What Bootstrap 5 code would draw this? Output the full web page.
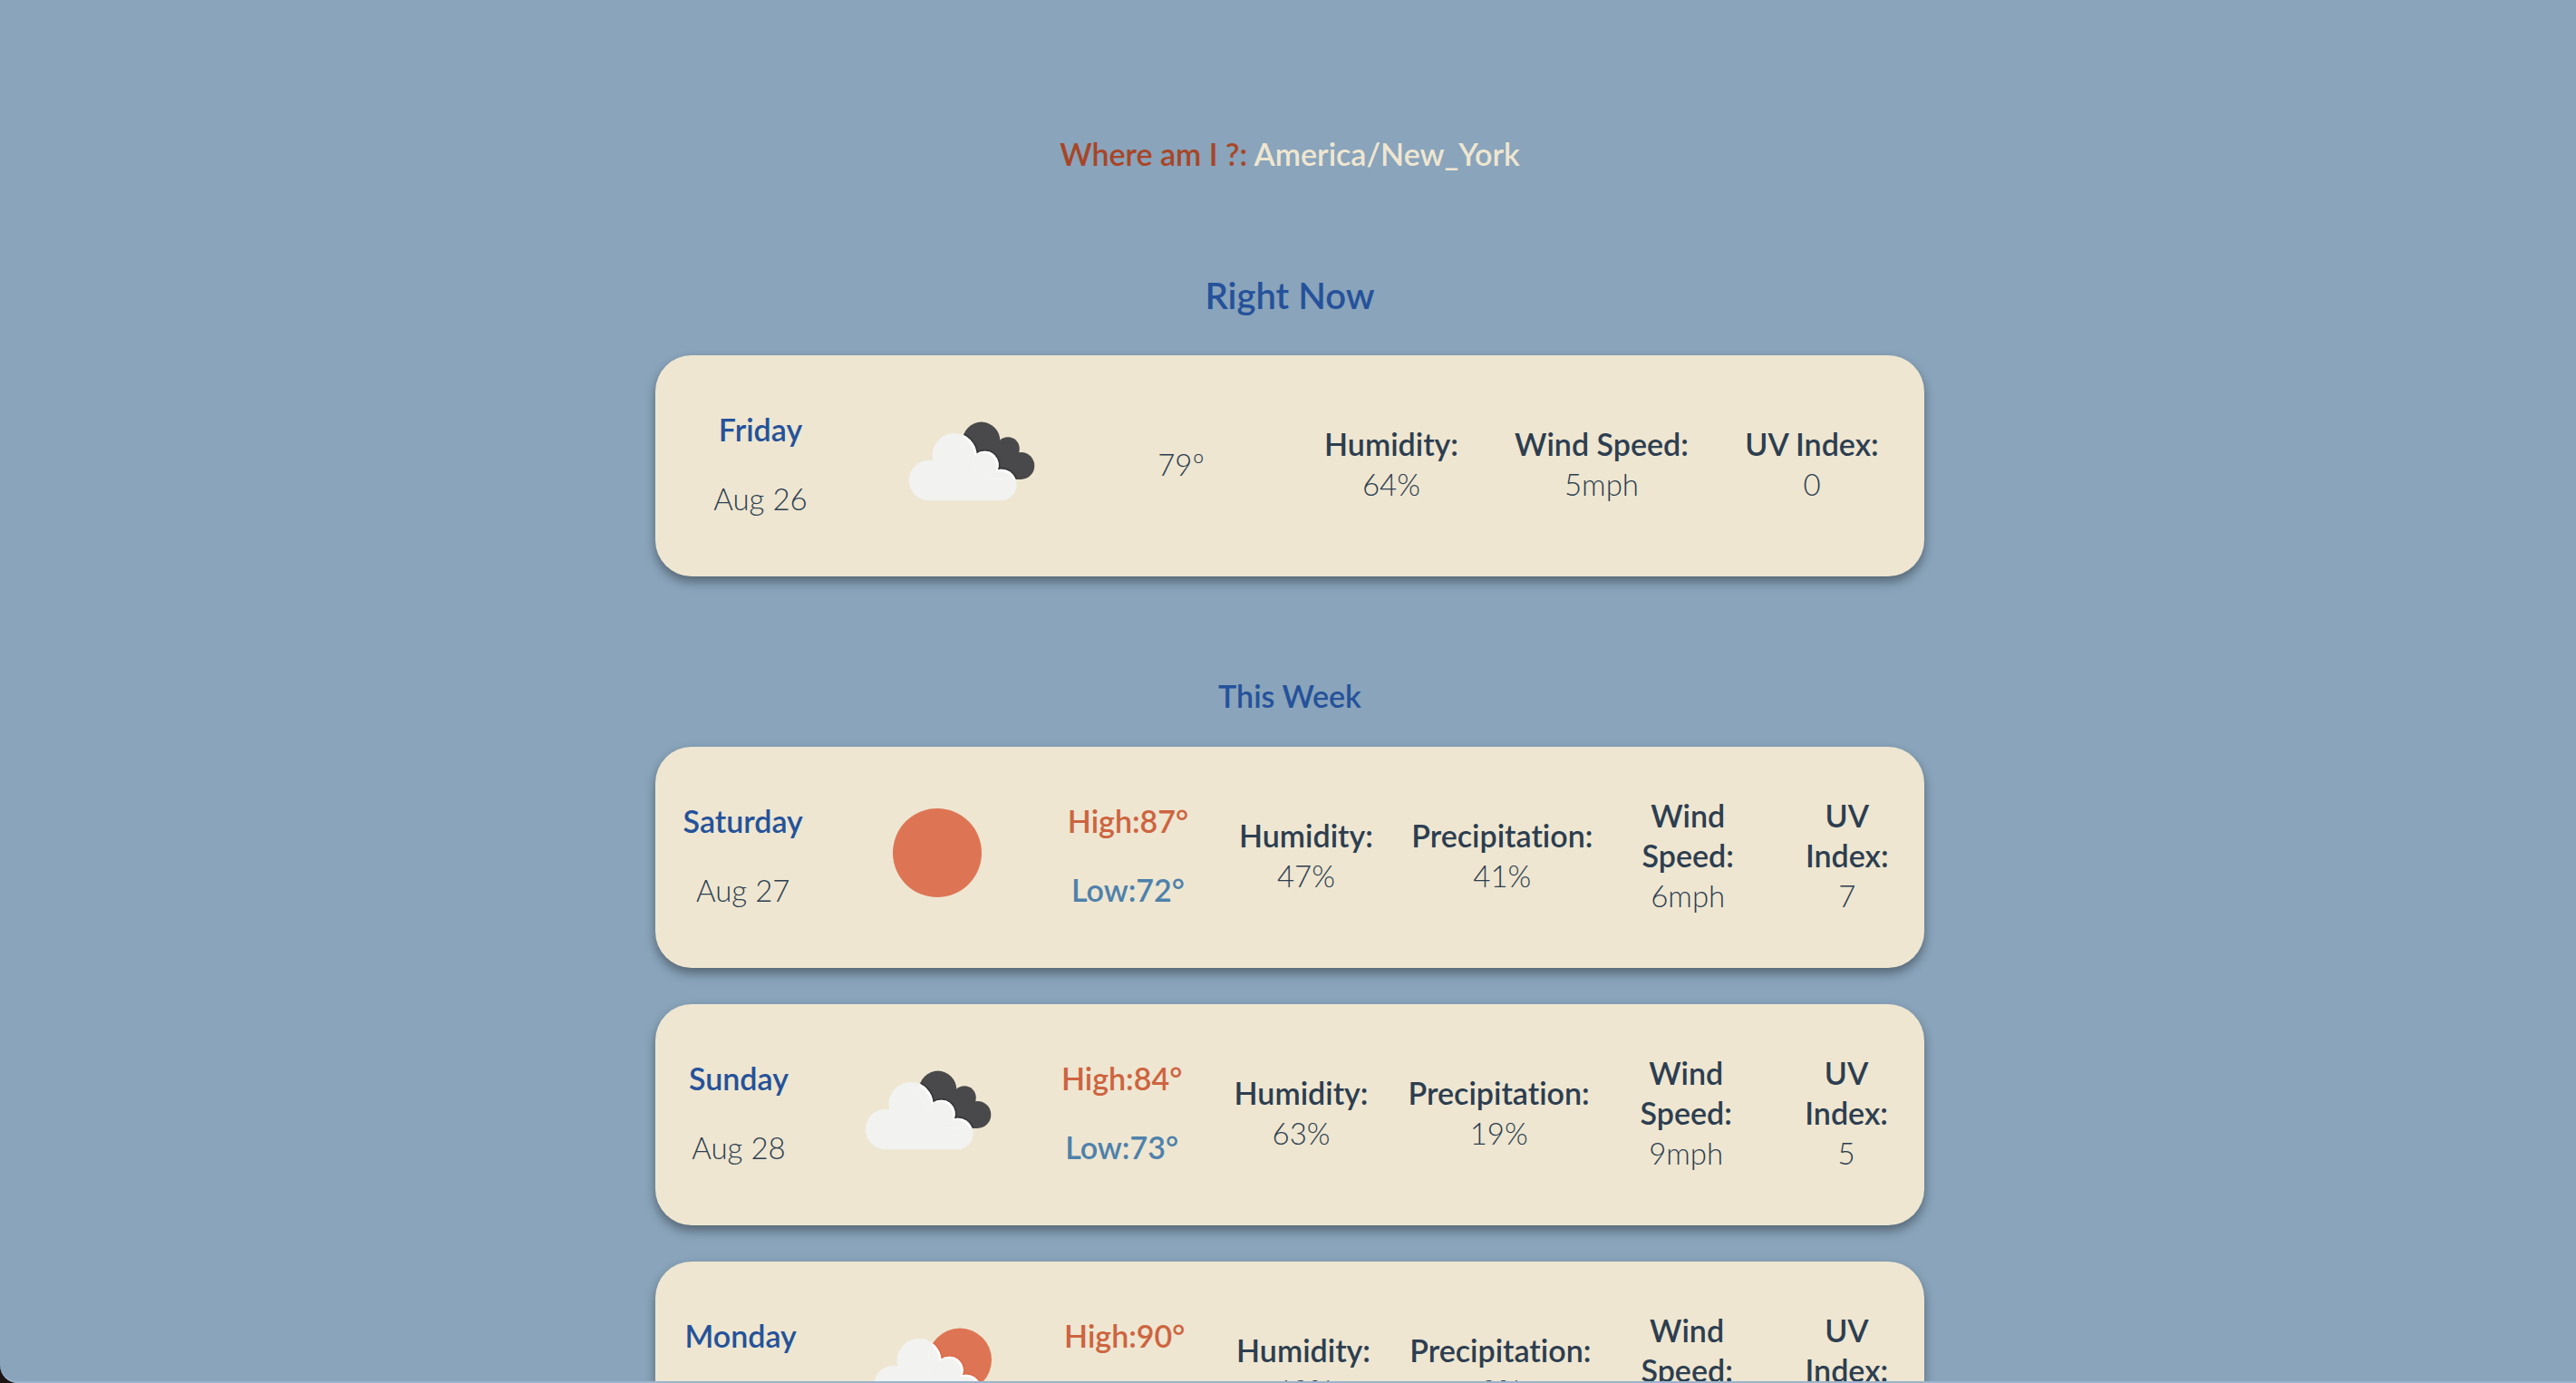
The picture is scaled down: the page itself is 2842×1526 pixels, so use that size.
<!DOCTYPE html>
<html lang="en">
<head>
<meta charset="utf-8">
<meta name="viewport" content="width=device-width, initial-scale=1">
<title>Weather</title>
<link href="https://cdn.jsdelivr.net/npm/bootstrap@5.3.0/dist/css/bootstrap.min.css" rel="stylesheet">
<style>
html { scrollbar-width: none; }
body {
  font-family: Lato, "Open Sans", sans-serif;
  font-size: 33px;
  line-height: 44px;
  font-weight: 300;
  font-variant-ligatures: none;
  color: #2d3e50;
  background: #89a4bb;
}
.window-edge {
  inset: 0;
  pointer-events: none;
  border-bottom: 2px solid #9ab5cd;
  border-bottom-left-radius: 20px;
  box-shadow: 0 0 0 20px #1e1614;
}
.forecast { max-width: 1400px; padding-top: 148px; }
.strong-text { font-size: 34px; font-weight: 600; line-height: 44px; }
.place-line { margin-bottom: 108px; }
.place-label { color: #a84526; }
.place-name { color: #efe6d1; }
.title-now { font-size: 40px; line-height: 52px; font-weight: 600; color: #25529a; margin-bottom: 40px; }
.title-week { color: #25529a; margin: 110px 0 34px; }
.weather-card {
  height: 244px;
  padding-bottom: 4px;
  background: #eee6d1;
  border-radius: 40px;
  box-shadow: 0 6px 12px rgba(0, 0, 0, .38);
}
.now-grid { display: grid; grid-template-columns: repeat(6, 1fr); padding-right: 8px; }
.day-grid { display: grid; grid-template-columns: var(--day) 234fr 190fr 204fr 230fr 181fr 171fr; }
.day-grid > *, .now-grid > * { min-width: 0; }
.day-sat { --day: 194fr; }
.day-sun { --day: 183fr; }
.day-mon { --day: 188fr; }
.stack { gap: 32px; }
.day-name { color: #25529a; }
.high { color: #cd6440; }
.low { color: #4e81ab; }
.two-line { width: min-content; }
.sky { width: 180px; height: 120px; }
</style>
</head>
<body>
<svg class="position-absolute" width="0" height="0" aria-hidden="true">
  <defs>
    <filter id="soft" x="-20%" y="-20%" width="140%" height="140%"><feGaussianBlur stdDeviation="1.4"/></filter>
    <g id="cloud-front">
      <circle cx="73" cy="52.5" r="24.5"/>
      <circle cx="45" cy="80" r="22.2"/>
      <circle cx="106.5" cy="63" r="15.2"/>
      <circle cx="124.5" cy="85" r="17.2"/>
      <path d="M45 66 L60 60 L106 60 L124 80 V102.2 H45 Z"/>
    </g>
    <g id="cloud-back">
      <circle cx="102.7" cy="36.2" r="20.6"/>
      <circle cx="132" cy="45" r="12.8"/>
      <circle cx="146.3" cy="63.9" r="15"/>
      <path d="M90 45 L115 36 L132 42 L146 58 L146 78.9 L100 78 Z"/>
    </g>
    <clipPath id="back-area">
      <circle cx="102.7" cy="36.2" r="20.6"/>
      <circle cx="132" cy="45" r="12.8"/>
      <circle cx="146.3" cy="63.9" r="15"/>
      <path d="M90 45 L115 36 L132 42 L146 58 L146 78.9 L100 78 Z"/>
    </clipPath>
    <clipPath id="sun-area"><circle cx="118" cy="51.5" r="35"/></clipPath>
  </defs>
</svg>

<main class="ps-1">
  <div class="forecast container-fluid px-0 text-center">
    <p class="place-line strong-text"><span class="place-label">Where am I ?:</span> <span class="place-name">America/New_York</span></p>

    <section>
      <h1 class="title-now">Right Now</h1>
      <div class="weather-card now-grid align-items-center">
        <div class="d-flex flex-column stack">
          <span class="strong-text day-name">Friday</span>
          <span>Aug 26</span>
        </div>
        <div class="d-flex justify-content-center">
          <svg class="sky flex-shrink-0" viewBox="1 2 180 120" role="img" aria-label="Cloudy">
            <use href="#cloud-back" fill="#49494b"/>
            <g clip-path="url(#back-area)"><use href="#cloud-front" fill="#111" filter="url(#soft)"/></g>
            <use href="#cloud-front" fill="#f2f2f0"/>
            <g clip-path="url(#back-area)"><use href="#cloud-front" fill="#fff"/><use href="#cloud-front" fill="#f2f2f0" x="-2" y="2"/></g>
          </svg>
        </div>
        <div>79º</div>
        <div><div class="strong-text">Humidity:</div>64%</div>
        <div><div class="strong-text">Wind Speed:</div>5mph</div>
        <div><div class="strong-text">UV Index:</div>0</div>
      </div>
    </section>

    <section>
      <h2 class="title-week strong-text">This Week</h2>
      <div class="d-flex flex-column" style="gap: 40px">
        <div class="weather-card day-grid day-sat align-items-center">
          <div class="d-flex flex-column stack">
            <span class="strong-text day-name">Saturday</span>
            <span>Aug 27</span>
          </div>
          <div class="d-flex justify-content-center">
            <svg class="sky flex-shrink-0" viewBox="1 2 180 120" role="img" aria-label="Sunny"><circle cx="92" cy="59" r="49" fill="#dd7555"/></svg>
          </div>
          <div class="d-flex flex-column stack strong-text">
            <span class="high">High:87°</span>
            <span class="low">Low:72°</span>
          </div>
          <div><div class="strong-text">Humidity:</div>47%</div>
          <div><div class="strong-text">Precipitation:</div>41%</div>
          <div><div class="strong-text two-line mx-auto">Wind Speed:</div>6mph</div>
          <div><div class="strong-text two-line mx-auto">UV Index:</div>7</div>
        </div>

        <div class="weather-card day-grid day-sun align-items-center">
          <div class="d-flex flex-column stack">
            <span class="strong-text day-name">Sunday</span>
            <span>Aug 28</span>
          </div>
          <div class="d-flex justify-content-center">
            <svg class="sky flex-shrink-0" viewBox="3 2 180 120" role="img" aria-label="Cloudy">
              <use href="#cloud-back" fill="#49494b"/>
              <g clip-path="url(#back-area)"><use href="#cloud-front" fill="#111" filter="url(#soft)"/></g>
              <use href="#cloud-front" fill="#f2f2f0"/>
              <g clip-path="url(#back-area)"><use href="#cloud-front" fill="#fff"/><use href="#cloud-front" fill="#f2f2f0" x="-2" y="2"/></g>
            </svg>
          </div>
          <div class="d-flex flex-column stack strong-text">
            <span class="high">High:84°</span>
            <span class="low">Low:73°</span>
          </div>
          <div><div class="strong-text">Humidity:</div>63%</div>
          <div><div class="strong-text">Precipitation:</div>19%</div>
          <div><div class="strong-text two-line mx-auto">Wind Speed:</div>9mph</div>
          <div><div class="strong-text two-line mx-auto">UV Index:</div>5</div>
        </div>

        <div class="weather-card day-grid day-mon align-items-center">
          <div class="d-flex flex-column stack">
            <span class="strong-text day-name">Monday</span>
            <span>Aug 29</span>
          </div>
          <div class="d-flex justify-content-center">
            <svg class="sky flex-shrink-0" viewBox="-3 3 180 120" role="img" aria-label="Partly cloudy">
              <circle cx="118" cy="51.5" r="35" fill="#dd7555"/>
              <g clip-path="url(#sun-area)"><use href="#cloud-front" fill="#dd4a25" filter="url(#soft)"/></g>
              <use href="#cloud-front" fill="#f2f2f0"/>
              <g clip-path="url(#sun-area)"><use href="#cloud-front" fill="#fff"/><use href="#cloud-front" fill="#f2f2f0" x="-2" y="2"/></g>
            </svg>
          </div>
          <div class="d-flex flex-column stack strong-text">
            <span class="high">High:90°</span>
            <span class="low">Low:73°</span>
          </div>
          <div><div class="strong-text">Humidity:</div>49%</div>
          <div><div class="strong-text">Precipitation:</div>0%</div>
          <div><div class="strong-text two-line mx-auto">Wind Speed:</div>6mph</div>
          <div><div class="strong-text two-line mx-auto">UV Index:</div>7</div>
        </div>
      </div>
    </section>
  </div>
</main>
<div class="window-edge position-fixed"></div>
<script src="https://cdn.jsdelivr.net/npm/bootstrap@5.3.0/dist/js/bootstrap.bundle.min.js"></script>
</body>
</html>
